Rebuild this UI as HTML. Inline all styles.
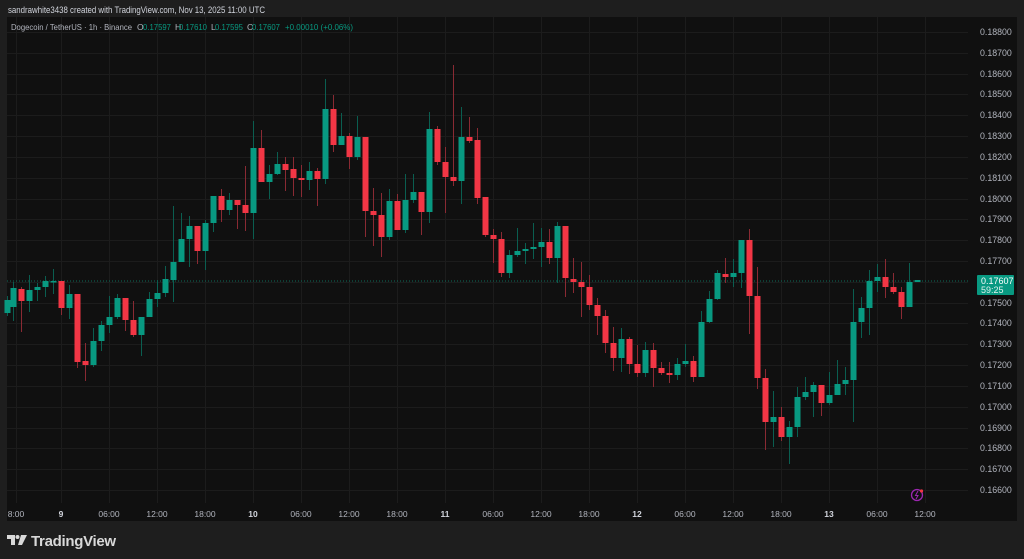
<!DOCTYPE html>
<html><head><meta charset="utf-8">
<style>
html,body{margin:0;padding:0;background:#1e1e1e;width:1024px;height:559px;overflow:hidden;font-family:"Liberation Sans",sans-serif;}
svg{display:block}
</style></head>
<body>
<svg id="s" width="1024" height="559" xmlns="http://www.w3.org/2000/svg" font-family="Liberation Sans, sans-serif">
<rect x="0" y="0" width="1024" height="559" fill="#1e1e1e"/>
<rect x="7" y="17" width="1010" height="504" fill="#101010"/>
<g id="grid" stroke="#1c1c1c" stroke-width="1"></g>
<text x="8" y="13" font-size="9" fill="#d1d4dc" textLength="257" lengthAdjust="spacingAndGlyphs">sandrawhite3438 created with TradingView.com, Nov 13, 2025 11:00 UTC</text>
<g font-size="8.5">
<text x="11" y="30" fill="#b2b5be" textLength="121" lengthAdjust="spacingAndGlyphs">Dogecoin / TetherUS · 1h · Binance</text>
<text x="137" y="30" fill="#b2b5be">O</text>
<text x="143" y="30" fill="#089981" textLength="28" lengthAdjust="spacingAndGlyphs">0.17597</text>
<text x="175" y="30" fill="#b2b5be">H</text>
<text x="179" y="30" fill="#089981" textLength="28" lengthAdjust="spacingAndGlyphs">0.17610</text>
<text x="211" y="30" fill="#b2b5be">L</text>
<text x="215" y="30" fill="#089981" textLength="28" lengthAdjust="spacingAndGlyphs">0.17595</text>
<text x="247" y="30" fill="#b2b5be">C</text>
<text x="252" y="30" fill="#089981" textLength="28" lengthAdjust="spacingAndGlyphs">0.17607</text>
<text x="285" y="30" fill="#089981" textLength="68" lengthAdjust="spacingAndGlyphs">+0.00010 (+0.06%)</text>
</g>
<line x1="7" y1="281" x2="968" y2="281" stroke="#0b6b5a" stroke-width="1" stroke-dasharray="1,2"/>
<g id="c"></g>
<g id="pl" font-size="8.8" fill="#b2b5be"></g>
<rect x="977" y="275" width="37" height="20" fill="#089981" rx="1"/>
<text x="981" y="284" font-size="9" fill="#fff">0.17607</text>
<text x="981" y="293" font-size="9" fill="#e0f2ee">59:25</text>
<g id="tl" font-size="8.5" fill="#b2b5be" text-anchor="middle"></g>
<circle cx="917" cy="495" r="5.5" fill="none" stroke="#9c27b0" stroke-width="1.3"/>
<path d="M918 491 L915.5 495.5 L918 495.5 L916 499" fill="none" stroke="#9c27b0" stroke-width="1"/>
<circle cx="921.5" cy="491" r="1.6" fill="#f23645"/>
<g fill="#d9d9d9">
<path d="M7 535 H15 V545 H11 V539 H7 Z"/>
<circle cx="17.5" cy="537" r="2"/>
<path d="M21 535 H27 L22 545 H18 Z"/>
</g>
<text x="31" y="546" font-size="15" font-weight="bold" fill="#d9d9d9" letter-spacing="-0.3">TradingView</text>
</svg>
<script>
var NS="http://www.w3.org/2000/svg";
function el(p,t,a,txt){var e=document.createElementNS(NS,t);for(var k in a)e.setAttribute(k,a[k]);if(txt!=null)e.textContent=txt;document.getElementById(p).appendChild(e);return e;}
var times=[[16,"8:00"],[61,"9",1],[109,"06:00"],[157,"12:00"],[205,"18:00"],[253,"10",1],[301,"06:00"],[349,"12:00"],[397,"18:00"],[445,"11",1],[493,"06:00"],[541,"12:00"],[589,"18:00"],[637,"12",1],[685,"06:00"],[733,"12:00"],[781,"18:00"],[829,"13",1],[877,"06:00"],[925,"12:00"]];
times.forEach(function(t){el("grid","line",{x1:t[0]+.5,y1:17,x2:t[0]+.5,y2:503});var a={x:t[0],y:517};if(t[2]){a["font-weight"]="bold";a.fill="#d1d4dc";}el("tl","text",a,t[1]);});
for(var i=0;i<=22;i++){var p=0.188-i*0.001;var y=Math.round(32+i*20.82);el("grid","line",{x1:7,y1:y+.5,x2:968,y2:y+.5});if(Math.abs(p-0.176)<0.0001)continue;el("pl","text",{x:980,y:y+3},p.toFixed(5));}
var d=[
[7,300,313,296,316,"g"],[13,288,307,282,321,"g"],[21,289,301,287,332,"r"],[29,290,301,275,312,"g"],[37,287,290,283,301,"g"],[45,281,287,276,297,"g"],[53,281,282,269,294,"g"],[61,281,308,281,315,"r"],[69,294,308,285,319,"g"],[77,294,362,294,368,"r"],[85,361,365,343,381,"r"],[93,341,365,328,367,"g"],[101,325,341,321,351,"g"],[109,317,325,296,333,"g"],[117,298,317,294,319,"g"],[125,298,320,298,331,"r"],[133,320,335,301,337,"r"],[141,317,335,317,356,"g"],[149,299,317,292,317,"g"],[157,293,299,280,307,"g"],[165,279,293,266,297,"g"],[173,262,280,206,302,"g"],[181,239,262,213,262,"g"],[189,226,239,216,267,"g"],[197,226,251,226,264,"r"],[205,223,251,220,270,"g"],[213,196,223,196,232,"g"],[221,196,210,189,222,"r"],[229,200,210,193,215,"g"],[237,200,205,200,229,"r"],[245,205,213,166,231,"r"],[253,148,213,121,239,"g"],[261,148,182,130,182,"r"],[269,174,182,165,199,"g"],[277,164,174,152,175,"g"],[285,164,170,157,191,"r"],[293,169,178,157,196,"r"],[301,178,180,165,197,"r"],[309,171,180,162,190,"g"],[317,171,179,168,206,"r"],[325,109,179,79,184,"g"],[333,109,145,95,152,"r"],[341,136,145,113,145,"g"],[349,136,157,133,169,"r"],[357,137,157,116,160,"g"],[365,137,211,137,237,"r"],[373,211,215,188,246,"r"],[381,215,237,193,257,"r"],[389,201,237,189,240,"g"],[397,201,230,194,230,"r"],[405,200,230,174,233,"g"],[413,192,200,174,203,"g"],[421,192,212,192,235,"r"],[429,129,212,112,223,"g"],[437,129,162,126,165,"r"],[445,162,177,147,213,"r"],[453,177,181,65,186,"r"],[461,137,181,107,204,"g"],[469,137,141,117,143,"r"],[477,140,198,128,204,"r"],[485,197,235,197,237,"r"],[493,235,239,229,263,"r"],[501,239,273,232,277,"r"],[509,255,273,250,278,"g"],[517,251,255,228,257,"g"],[525,249,251,243,264,"g"],[533,247,249,223,259,"g"],[541,242,247,228,267,"g"],[549,242,258,229,264,"r"],[557,226,258,222,283,"g"],[565,226,278,226,297,"r"],[573,279,282,258,293,"r"],[581,282,287,262,317,"r"],[589,287,305,275,310,"r"],[597,305,316,298,335,"r"],[605,316,343,310,353,"r"],[613,343,358,327,371,"r"],[621,339,358,328,372,"g"],[629,339,364,337,374,"r"],[637,364,373,345,377,"r"],[645,350,373,342,377,"g"],[653,350,368,343,387,"r"],[661,368,373,362,375,"r"],[669,373,375,362,383,"r"],[677,364,375,358,380,"g"],[685,361,364,344,367,"g"],[693,361,377,356,382,"r"],[701,322,377,311,377,"g"],[709,299,322,291,323,"g"],[717,273,299,270,300,"g"],[725,274,277,258,283,"r"],[733,273,277,259,287,"g"],[741,240,273,240,288,"g"],[749,240,296,229,334,"r"],[757,296,378,267,389,"r"],[765,378,422,369,450,"r"],[773,417,422,391,447,"g"],[781,417,437,407,441,"r"],[789,427,437,421,464,"g"],[797,397,427,387,437,"g"],[805,392,397,377,400,"g"],[813,385,392,382,417,"g"],[821,385,403,385,416,"r"],[829,395,403,372,405,"g"],[837,384,395,360,395,"g"],[845,380,384,367,395,"g"],[853,322,380,289,422,"g"],[861,308,322,297,338,"g"],[869,281,308,270,335,"g"],[877,277,281,264,292,"g"],[885,277,287,259,298,"r"],[893,287,292,273,294,"r"],[901,292,307,287,319,"r"],[909,282,307,263,307,"g"],[917,280,282,280,282,"g"]];
d.forEach(function(c){var col=c[5]=="g"?"#089981":"#f23645";var wc=c[5]=="g"?"#0a5e50":"#8a2a33";
el("c","line",{x1:c[0]+.5,y1:c[3],x2:c[0]+.5,y2:c[4],stroke:wc,"stroke-width":1});
var h=Math.max(1.5,c[2]-c[1]);el("c","rect",{x:c[0]-2.5,y:c[1],width:6,height:h,fill:col});});
</script>
</body></html>
